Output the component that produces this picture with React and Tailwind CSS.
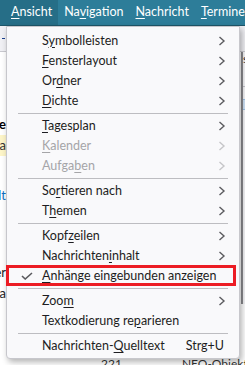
const font = { fontFamily: 'Lato, "Noto Sans", sans-serif' };

function Key({ text, k }) {
  // underline the access key letter at index k
  return (
    <>
      {text.slice(0, k)}
      <span className="underline underline-offset-2">{text[k]}</span>
      {text.slice(k + 1)}
    </>
  );
}

function Chevron({ off }) {
  return (
    <svg width="8" height="10" viewBox="0 0 8 10" className={off ? "text-[#c6c6c9]" : "text-[#5c5c60]"}>
      <polyline points="1.5,1 6,5 1.5,9" fill="none" stroke="currentColor" strokeWidth="1.4" />
    </svg>
  );
}

function Tick() {
  return (
    <svg width="12" height="8" viewBox="0 0 12 8" className="text-[#5a5a5e]">
      <polyline points="1,4 4.2,7 11,1" fill="none" stroke="currentColor" strokeWidth="1.6" />
    </svg>
  );
}

const groups = [
  [
    { t: "Symbolleisten", k: 1, sub: true },
    { t: "Fensterlayout", k: 0, sub: true },
    { t: "Ordner", k: 2, sub: true },
    { t: "Dichte", k: 0, sub: true },
  ],
  [
    { t: "Tagesplan", k: 0, sub: true },
    { t: "Kalender", k: 0, sub: true, off: true },
    { t: "Aufgaben", k: 5, sub: true, off: true },
  ],
  [
    { t: "Sortieren nach", k: 2, sub: true },
    { t: "Themen", k: 1, sub: true },
  ],
  [
    { t: "Kopfzeilen", k: 4, sub: true },
    { t: "Nachrichteninhalt", k: 11, sub: true },
    { t: "Anhänge eingebunden anzeigen", k: 0, checked: true, marked: true },
  ],
  [
    { t: "Zoom", k: 3, sub: true },
    { t: "Textkodierung reparieren", k: 16 },
  ],
  [{ t: "Nachrichten-Quelltext", k: 12, shortcut: "Strg+U" }],
];

function MenuItem({ item }) {
  return (
    <div
      className={
        "relative flex h-5 items-center pl-[35px] pr-[13px] " +
        (item.off ? "text-[#a5a5a8]" : "text-[#1d1d22]")
      }
    >
      <div className="absolute left-[14px] top-0 flex h-5 items-center">{item.checked && <Tick />}</div>
      <span className="flex-1 whitespace-nowrap">
        <Key text={item.t} k={item.k} />
      </span>
      {item.sub && <Chevron off={item.off} />}
      {item.shortcut && <span className="pr-[2px]">{item.shortcut}</span>}
      {item.marked && (
        <div className="absolute left-[-1px] right-[3px] top-[-1px] bottom-0 border-[3px] border-[#ec1c24]" />
      )}
    </div>
  );
}

function Peek({ children, className = "" }) {
  return (
    <div className={"flex w-[6px] justify-end overflow-hidden whitespace-nowrap " + className}>
      <span className="shrink-0">{children}</span>
    </div>
  );
}

export default function App() {
  return (
    <div className="relative h-[365px] w-[245px] overflow-hidden bg-white text-[12.5px]" style={font}>
      {/* menubar */}
      <div className="flex h-[26px] items-center overflow-hidden whitespace-nowrap border-b border-[#1e5669] bg-[#2d7d99] text-[12.5px] text-white">
        <div className="flex h-full items-center bg-[#266e87] pl-[11px] pr-[6px]">
          <Key text="Ansicht" k={0} />
        </div>
        <div className="px-[6px]">
          <Key text="Navigation" k={2} />
        </div>
        <div className="px-[6px]">
          <Key text="Nachricht" k={0} />
        </div>
        <div className="px-[6px]">
          <Key text="Termine und Aufgaben" k={0} />
        </div>
      </div>

      {/* toolbar */}
      <div className="flex h-[26px] items-center border-b border-[#c9c9cf] bg-[#f0f0f4]">
        <span className="ml-[2px] h-px w-[3px] bg-[#1b3f8f]" />
      </div>

      {/* content behind the menu */}
      <div className="flex">
        <div className="flex w-[241px] flex-col pt-[62px] text-[13px] leading-[21px]">
          <Peek className="font-bold text-black">Neue</Peek>
          <Peek className="bg-[#fdf5c8] text-[#333]">Da</Peek>
          <div className="h-[29px]" />
          <Peek className="text-[#0a6fc2]">Inhalt</Peek>
          <div className="h-[56px]" />
          <Peek className="text-[#222]">Ordner</Peek>
          <Peek className="text-[#222]">Da</Peek>
        </div>
        <div className="flex w-[4px] flex-col border-l-2 border-[#8a8a8e] bg-[#f6f6f8] text-[12px]">
          <div className="h-[14px] overflow-hidden leading-[14px] text-[#333]">s</div>
          <div className="h-[21px] border-b border-[#c6c6cc]" />
          <div className="h-[12px]" />
          <div className="h-[11px] border-y border-[#9ec2e6] bg-[#cfe3f7]" />
        </div>
      </div>

      {/* bottom strip */}
      <div className="absolute bottom-0 left-0 flex h-[8px] w-full items-start overflow-hidden whitespace-nowrap text-[12px] leading-[14px] text-[#333]">
        <span className="ml-[101px]">221</span>
        <span className="ml-[36px] h-full w-px bg-[#c6c6cc]" />
        <span className="ml-[24px]">NEO-Objekt</span>
      </div>

      {/* dropdown menu */}
      <div className="absolute left-[6px] top-[26px] w-[234px] rounded-b-[4px] border border-[#c7c7cc] bg-[#f9f9fb] pb-[2px] pt-[4px] shadow-[2px_3px_6px_rgba(0,0,0,0.3)]">
        {groups.map((g, i) => (
          <div key={i}>
            {i > 0 && <div className="mx-[11px] my-[2px] h-px bg-[#bdbdc1]" />}
            {g.map((item) => (
              <MenuItem key={item.t} item={item} />
            ))}
          </div>
        ))}
      </div>
    </div>
  );
}
